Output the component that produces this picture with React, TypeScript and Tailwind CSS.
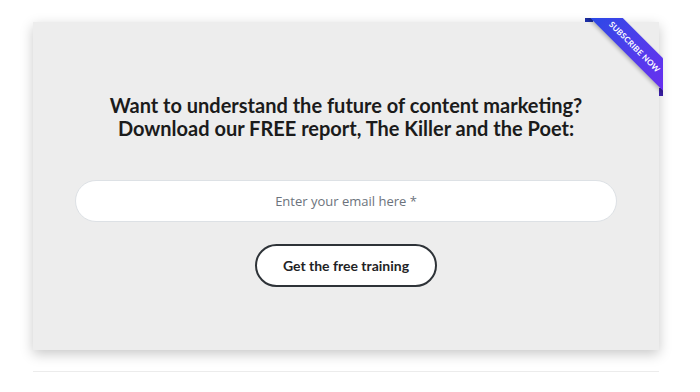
import { useState } from 'react';

const Ribbon = () => {
    return (
        <div className="absolute -top-[4px] -right-[4px] w-[78px] h-[78px] overflow-hidden">
            <div className="absolute top-0 left-0 w-[8px] h-[4px] bg-[#1d2fa8]" />
            <div className="absolute bottom-0 right-0 w-[4px] h-[8px] bg-[#3b1fa8]" />
            <span className="absolute left-[-6px] top-[17px] w-[112px] h-[23px] rotate-45 flex items-center justify-center bg-gradient-to-r from-[#2449e6] to-[#6a2cf0] text-white text-[8px] font-bold tracking-[0.2px] uppercase shadow-[0_2px_4px_rgba(0,0,0,0.25)]">
                Subscribe now
            </span>
        </div>
    );
};

export default function App() {
    const [email, setEmail] = useState('');
    return (
        <div className="w-[700px] h-[392px] bg-white pl-[33px] pt-[22px] font-['Lato',sans-serif]">
            <div className="relative w-[626px] h-[328px] bg-[#ededed] shadow-[0_4px_12px_rgba(0,0,0,0.22)] px-[42px] pt-[72px] flex flex-col items-center">
                <Ribbon />
                <h2 className="text-center text-[20px] leading-[23px] font-bold text-[#1b1b1b]">
                    Want to understand the future of content marketing?
                    <br />
                    Download our FREE report, The Killer and the Poet:
                </h2>
                <input
                    type="email"
                    value={email}
                    onChange={(e) => setEmail(e.target.value)}
                    placeholder="Enter your email here *"
                    className="mt-[40px] w-full h-[42px] rounded-full bg-white border border-[#dde1e5] text-center text-[13px] text-gray-700 placeholder:text-[#6c737c] focus:outline-none font-['Open_Sans',sans-serif]"
                />
                <button className="mt-[22px] w-[182px] h-[43px] rounded-full border-2 border-[#2e3338] bg-white text-[14px] font-bold text-[#1f2326]">
                    Get the free training
                </button>
            </div>
            <div className="mt-[21px] w-[626px] h-px bg-[#ececec]" />
        </div>
    );
}
